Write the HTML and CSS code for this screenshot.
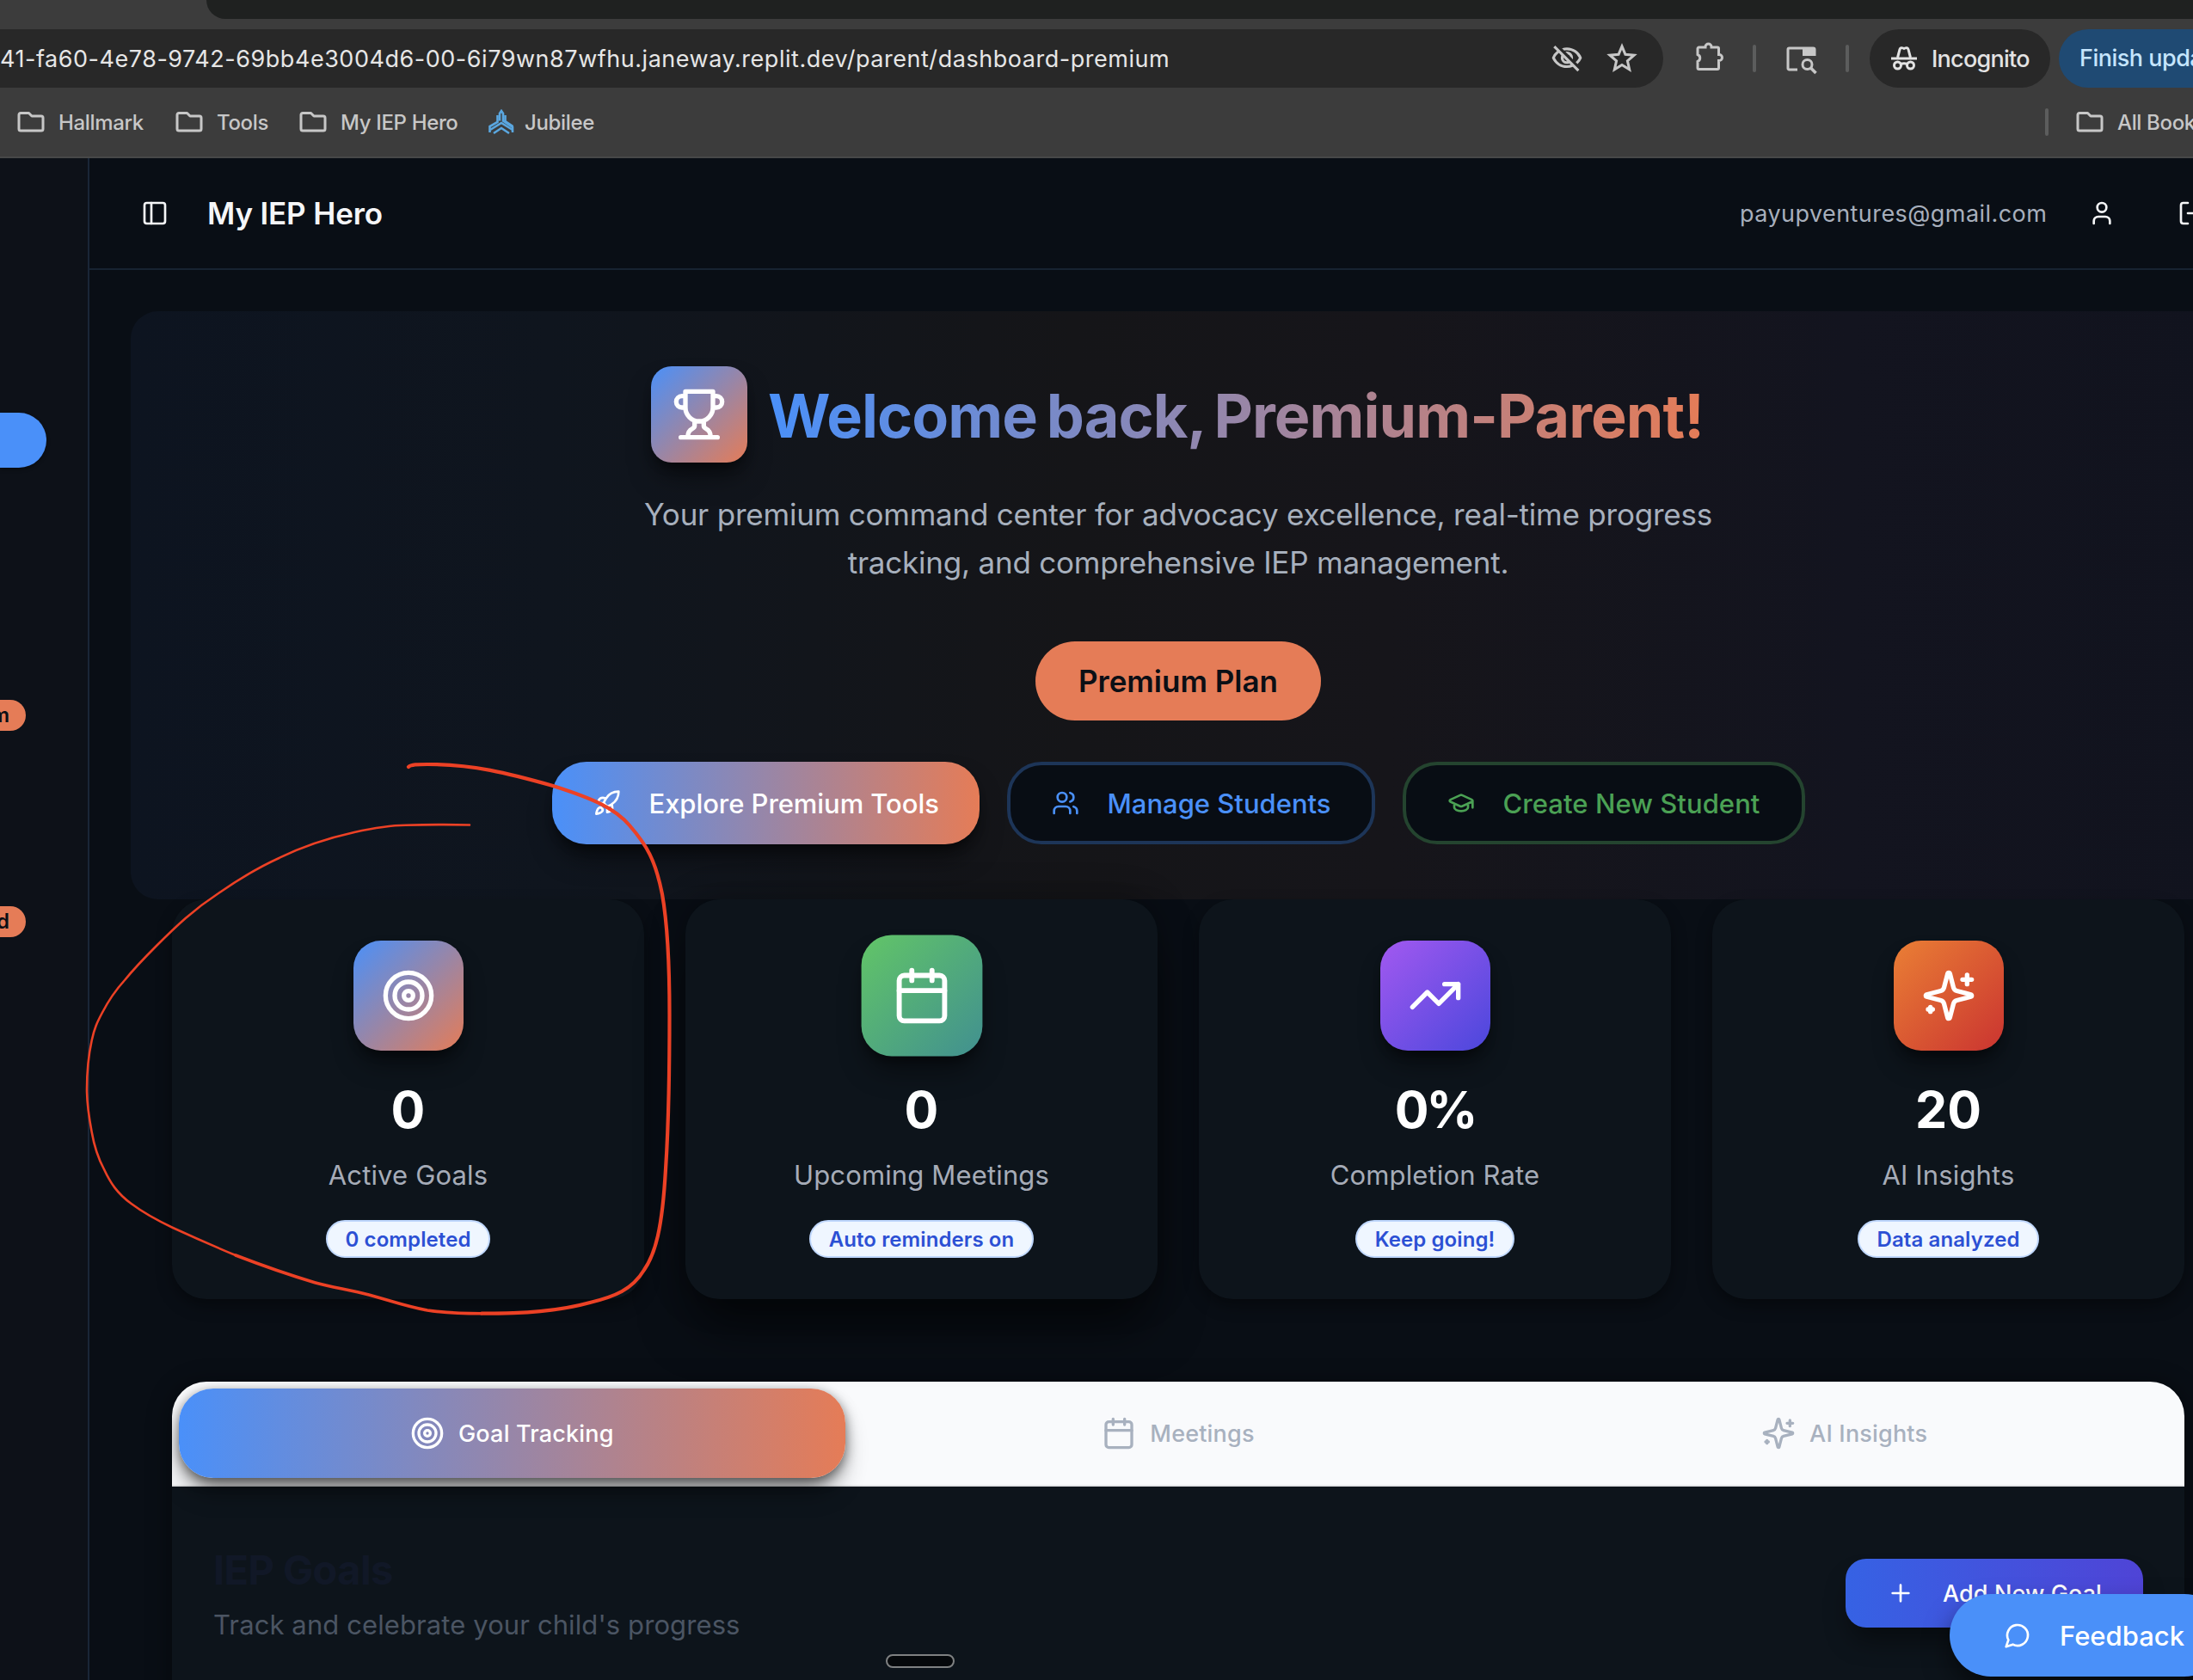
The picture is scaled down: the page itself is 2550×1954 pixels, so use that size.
FILE: index.html
```html
<!DOCTYPE html>
<html lang="en">
<head>
<meta charset="utf-8">
<title>My IEP Hero</title>
<link rel="stylesheet" href="styles.css">
</head>
<body>
<svg class="sprite" aria-hidden="true">
  <symbol id="folder" viewBox="0 0 32 24"><path d="M2 4.500V20a2 2 0 0 0 2 2h24a2 2 0 0 0 2-2V7a2 2 0 0 0-2-2H17l-3.500-3.500H4a2 2 0 0 0-2 2Z" fill="none" stroke="currentColor" stroke-width="3" stroke-linejoin="round"/></symbol>
  <symbol id="target" viewBox="0 0 24 24"><circle cx="12" cy="12" r="10"/><circle cx="12" cy="12" r="6"/><circle cx="12" cy="12" r="2"/></symbol>
  <symbol id="calendar" viewBox="0 0 24 24"><path d="M8 2v4M16 2v4M3 10h18"/><rect width="18" height="18" x="3" y="4" rx="2"/></symbol>
  <symbol id="sparkles" viewBox="0 0 24 24"><path d="M9.937 15.500A2 2 0 0 0 8.500 14.063l-6.135-1.582a.5.5 0 0 1 0-.962L8.500 9.936A2 2 0 0 0 9.937 8.500l1.582-6.135a.5.5 0 0 1 .963 0L14.063 8.500A2 2 0 0 0 15.500 9.937l6.135 1.581a.5.5 0 0 1 0 .964L15.500 14.063a2 2 0 0 0-1.437 1.437l-1.582 6.135a.5.5 0 0 1-.963 0zM20 3v4M22 5h-4M4 17v2M5 18H3"/></symbol>
</svg>

<div class="browser">
  <div class="tabstrip"></div>
  <div class="toolbar">
    <div class="omnibox">
      <span class="url">41-fa60-4e78-9742-69bb4e3004d6-00-6i79wn87wfhu.janeway.replit.dev<span class="path">/parent/dashboard-premium</span></span>
      <svg class="eye" viewBox="0 0 24 24" fill="currentColor"><path d="M12 6a9.770 9.770 0 0 1 8.820 5.500 9.650 9.650 0 0 1-2.410 3.120l1.410 1.410c1.390-1.230 2.490-2.770 3.180-4.530C21.270 7.110 17 4 12 4c-1.270 0-2.490.2-3.640.57l1.650 1.650C10.660 6.090 11.320 6 12 6zm-1.070 1.140L13 9.210c.57.25 1.030.71 1.280 1.280l2.070 2.070c.08-.34.14-.7.14-1.070C16.500 9.010 14.480 7 12 7c-.37 0-.72.05-1.070.14zM2.010 3.870l2.680 2.680A11.738 11.738 0 0 0 1 11.500C2.730 15.890 7 19 12 19c1.520 0 2.980-.29 4.320-.82l3.420 3.420 1.410-1.410L3.420 2.450 2.010 3.870zm7.500 7.500 2.610 2.610c-.04.01-.08.02-.12.02a2.500 2.500 0 0 1-2.500-2.500c0-.05.01-.08.01-.13zm-3.400-3.400 1.750 1.750a4.600 4.600 0 0 0-.36 1.780 4.507 4.507 0 0 0 6.270 4.140l.98.98c-.88.24-1.800.38-2.750.38a9.770 9.770 0 0 1-8.820-5.500c.7-1.430 1.720-2.610 2.930-3.530z"/></svg>
      <svg class="star" viewBox="0 0 32 32"><path d="m16 3.500 3.500 8.300 9 .8-6.800 5.900 2 8.800-7.700-4.700-7.700 4.700 2-8.800-6.800-5.900 9-.8Z" fill="none" stroke="currentColor" stroke-width="2.700"/></svg>
    </div>
    <svg class="puzzle" viewBox="0 0 34 34"><path d="M4.500 6H12v-.5a3.500 3.500 0 0 1 7 0V6h7A1.500 1.500 0 0 1 27.500 7.500V14.500h.5a3.500 3.500 0 0 1 0 7h-.5v8.500A1.500 1.500 0 0 1 26 31.500H4.500A1.500 1.500 0 0 1 3 30V22.500a4.300 4.300 0 0 0 0-8V7.500A1.500 1.500 0 0 1 4.500 6Z" fill="none" stroke="currentColor" stroke-width="3"/></svg>
    <i class="divider"></i>
    <svg class="lens" viewBox="0 0 36 34"><path d="M13 28H3.500A1.500 1.500 0 0 1 2 26.500v-22A1.500 1.500 0 0 1 3.500 3h28A1.500 1.500 0 0 1 33 4.500V12" fill="none" stroke="currentColor" stroke-width="3"/><path d="M19 3h14v9H19z" fill="currentColor"/><circle cx="24.500" cy="22" r="5.500" fill="none" stroke="currentColor" stroke-width="3"/><path d="m28.500 26 6 6" stroke="currentColor" stroke-width="3.500"/></svg>
    <i class="divider second"></i>
    <div class="chip">
      <svg class="spy" viewBox="0 0 30 28" fill="none" stroke="currentColor" stroke-width="3"><path d="M0 14h30"/><path d="M7.500 13 10 3.500C10.500 1.500 12 1 15 2.500c3-1.500 4.500-1 5 1L22.500 13"/><circle cx="7.500" cy="22" r="4"/><circle cx="22.500" cy="22" r="4"/><path d="M11 21c2.500-1.500 5.500-1.500 8 0"/></svg>
      <span class="incog">Incognito</span>
    </div>
    <div class="update"><span>Finish update</span></div>
  </div>
  <div class="bookmarks">
    <span class="bm b1"><svg class="fold"><use href="#folder"/></svg><span>Hallmark</span></span>
    <span class="bm b2"><svg class="fold"><use href="#folder"/></svg><span>Tools</span></span>
    <span class="bm b3"><svg class="fold"><use href="#folder"/></svg><span>My IEP Hero</span></span>
    <span class="bm b4"><svg class="jub" viewBox="0 0 30 30" fill="none" stroke="#5aa7e0" stroke-width="2.600"><path d="M13 13.500V5l2-3 2 3v8.500l11 7.500v6"/><path d="M10.500 7v8L1.500 20v7"/><path d="M19.500 7v7l9 6"/><path d="m2 24 13-8 13 8M6 28l9-6 9 6"/></svg><span>Jubilee</span></span>
    <i class="divider"></i>
    <span class="bm b5"><svg class="fold"><use href="#folder"/></svg><span>All Bookmarks</span></span>
  </div>
</div>

<div class="app">
  <aside class="sidebar">
    <div class="nav-active"></div>
    <span class="tag tag1">m</span>
    <span class="tag tag2">d</span>
  </aside>
  <div class="main">
    <header class="header">
      <svg class="ic panel" viewBox="0 0 24 24"><rect width="18" height="18" x="3" y="3" rx="2"/><path d="M9 3v18"/></svg>
      <h1 class="brand">My IEP Hero</h1>
      <span class="email">payupventures@gmail.com</span>
      <svg class="ic user" viewBox="0 0 24 24"><path d="M19 21v-2a4 4 0 0 0-4-4H9a4 4 0 0 0-4 4v2"/><circle cx="12" cy="7" r="4"/></svg>
      <svg class="ic logout" viewBox="0 0 24 24"><path d="M9 21H5a2 2 0 0 1-2-2V5a2 2 0 0 1 2-2h4M16 17l5-5-5-5M21 12H9"/></svg>
    </header>

    <section class="hero">
      <div class="hello">
        <div class="trophy"><svg class="ic big" viewBox="0 0 24 24"><path d="M6 9H4.500a2.500 2.500 0 0 1 0-5H6M18 9h1.500a2.500 2.500 0 0 0 0-5H18M4 22h16M10 14.660V17c0 .55-.47.98-.97 1.210C7.850 18.750 7 20.240 7 22M14 14.660V17c0 .55.470.980.970 1.210C16.150 18.750 17 20.240 17 22M18 2H6v7a6 6 0 0 0 12 0V2Z"/></svg></div>
        <h2 class="welcome">Welcome back, Premium-Parent!</h2>
      </div>
      <p class="lead"><span class="l1">Your premium command center for advocacy excellence, real-time progress</span><br><span class="l2">tracking, and comprehensive IEP management.</span></p>
      <div class="plan"><span>Premium Plan</span></div>
      <div class="actions">
        <div class="btn explore"><svg class="ic" viewBox="0 0 24 24"><path d="M4.500 16.500c-1.500 1.260-2 5-2 5s3.740-.5 5-2c.71-.84.7-2.130-.09-2.910a2.180 2.180 0 0 0-2.910-.09zM12 15l-3-3a22 22 0 0 1 2-3.950A12.880 12.880 0 0 1 22 2c0 2.720-.78 7.500-6 11a22.350 22.350 0 0 1-4 2zM9 12H4s.55-3.030 2-4c1.620-1.080 5 0 5 0M12 15v5s3.030-.55 4-2c1.080-1.620 0-5 0-5"/></svg><span>Explore Premium Tools</span></div>
        <div class="btn manage"><svg class="ic" viewBox="0 0 24 24"><path d="M16 21v-2a4 4 0 0 0-4-4H6a4 4 0 0 0-4 4v2M22 21v-2a4 4 0 0 0-3-3.870M16 3.130a4 4 0 0 1 0 7.750"/><circle cx="9" cy="7" r="4"/></svg><span>Manage Students</span></div>
        <div class="btn create"><svg class="ic" viewBox="0 0 24 24"><path d="M21.420 10.922a1 1 0 0 0-.019-1.838L12.830 5.180a2 2 0 0 0-1.660 0L2.600 9.080a1 1 0 0 0 0 1.832l8.570 3.908a2 2 0 0 0 1.660 0zM22 10v6M6 12.500V16a6 3 0 0 0 12 0v-3.500"/></svg><span>Create New Student</span></div>
      </div>
    </section>

    <section class="stats">
      <article class="stat">
        <div class="tile t-blue"><svg class="ic big"><use href="#target"/></svg></div>
        <strong class="num">0</strong><span class="label">Active Goals</span><span class="pill p1">0 completed</span>
      </article>
      <article class="stat raised">
        <div class="tile t-green"><svg class="ic big"><use href="#calendar"/></svg></div>
        <strong class="num">0</strong><span class="label">Upcoming Meetings</span><span class="pill p2">Auto reminders on</span>
      </article>
      <article class="stat">
        <div class="tile t-purple"><svg class="ic big" viewBox="0 0 24 24"><path d="m22 7-8.500 8.500-5-5L2 17M16 7h6v6"/></svg></div>
        <strong class="num pct">0%</strong><span class="label">Completion Rate</span><span class="pill p3">Keep going!</span>
      </article>
      <article class="stat">
        <div class="tile t-orange"><svg class="ic big"><use href="#sparkles"/></svg></div>
        <strong class="num">20</strong><span class="label">AI Insights</span><span class="pill p4">Data analyzed</span>
      </article>
    </section>

    <section class="board">
      <div class="tabs">
        <div class="tab on"><svg class="ic mid"><use href="#target"/></svg><span>Goal Tracking</span></div>
        <div class="tab"><svg class="ic mid"><use href="#calendar"/></svg><span>Meetings</span></div>
        <div class="tab"><svg class="ic mid"><use href="#sparkles"/></svg><span>AI Insights</span></div>
      </div>
      <div class="goals">
        <div>
          <h3 class="goals-title"><span>IEP Goals</span></h3>
          <p class="goals-sub"><span>Track and celebrate your child's progress</span></p>
        </div>
        <div class="add"><svg class="ic" viewBox="0 0 24 24"><path d="M5 12h14M12 5v14"/></svg><span>Add New Goal</span></div>
      </div>
    </section>
  </div>
</div>

<div class="feedback"><svg class="ic" viewBox="0 0 24 24"><path d="M7.900 20A9 9 0 1 0 4 16.100L2 22Z"/></svg><span>Feedback</span></div>
<div class="handle"></div>

<svg class="scribble" viewBox="0 0 2550 1954" fill="none" stroke="#ec4125" stroke-linecap="round">
  <path stroke-width="4.200" d="M475 892C478 889 486 889 497 889C550 889 590 899 643 914C690 929 715 940 732 960C752 983 762 1000 770 1040C778 1085 778.500 1140 778.500 1180C778.500 1240 778 1300 774 1360C770 1430 762 1458 749 1477C735 1500 715 1508 686 1515C650 1525 610 1527.700 560 1527.700"/>
  <path stroke-width="3.600" d="M560 1527.700C530 1527.700 510 1526 497 1524C470 1519 452 1512 429 1506C405 1500 385 1497 366 1491.700C330 1481 300 1470 274 1460"/>
  <path stroke-width="2.600" d="M274 1460C250 1450 225 1439 201 1428C180 1418 166 1410 152.700 1400C136 1388 128 1375 121 1360C113 1345 109 1330 106.700 1316.700C102 1292 101 1280 101 1267C101 1245 103 1227 106.700 1210C110 1195 113 1189 118.800 1178C126 1164 135 1151 145 1140C158 1124 170 1112 182 1100C205 1077 225 1058 254 1039C277 1023 300 1009 325 997.700C355 983 385 974 412 968C435 963 455 960 471.600 959.800C500 959 525 959 546 959.500"/>
</svg>
</body>
</html>
```
FILE: styles.css
```css
* { box-sizing: border-box; }
html, body { margin: 0; padding: 0; }
body {
  width: 2550px; height: 1954px; overflow: hidden; position: relative;
  display: flex; flex-direction: column;
  background: #090e15; color: #fff;
  font-family: Inter, "Liberation Sans", sans-serif;
}
h1, h2, h3, p { margin: 0; }
span { white-space: nowrap; }
svg { display: block; flex: none; }
.sprite { position: absolute; width: 0; height: 0; }
.ic { width: 32px; height: 32px; fill: none; stroke: currentColor; stroke-width: 2; stroke-linecap: round; stroke-linejoin: round; }
.ic.big { width: 64px; height: 64px; }
.ic.mid { width: 40px; height: 40px; }

/* browser chrome */
.browser { height: 184px; flex: none; background: #3c3c3c; border-bottom: 2px solid #474848; color: #c7c7c7; overflow: hidden; }
.tabstrip { height: 22px; margin-left: 240px; background: #1f2120; border-bottom-left-radius: 24px; }
.toolbar { display: flex; align-items: center; margin-top: 12px; height: 68px; }
.omnibox { display: flex; align-items: center; width: 1934px; height: 68px; background: #282828; border-radius: 0 34px 34px 0; flex: none; }
.url { width: 1803px; font-size: 27px; line-height: 69px; color: #e6e6e6; flex: none; letter-spacing: .53px; }
.eye { width: 38px; height: 38px; }
.star { width: 36px; height: 36px; margin-left: 27px; }
.puzzle { width: 34px; height: 34px; margin: 0 0 4px 37px; }
.divider { width: 4px; height: 32px; border-radius: 2px; background: #5c5d5d; flex: none; margin-left: 33px; }
.lens { width: 36px; height: 34px; margin: 4px 0 0 35px; }
.divider.second { margin-left: 33px; }
.chip { display: flex; align-items: center; width: 210px; height: 68px; margin-left: 24px; padding-left: 25px; border-radius: 34px; background: #282828; color: #e3e3e3; font-size: 27px; letter-spacing: -.75px; flex: none; font-weight: 500; }
.spy { width: 30px; height: 28px; margin-right: 17px; }
.update { width: 300px; height: 68px; margin-left: 10px; padding-left: 24px; border-radius: 34px; background: #1f4a73; color: #c5e5fd; font-size: 27px; letter-spacing: -.5px; line-height: 68px; flex: none; font-weight: 500; }
.bookmarks { display: flex; align-items: center; height: 80px; padding-left: 20px; font-size: 24px; letter-spacing: -.35px; }
.bm { display: flex; align-items: center; gap: 16px; flex: none; font-weight: 500; }
.fold { width: 32px; height: 24px; }
.jub { width: 30px; height: 30px; }
.b1 { width: 184px; }
.b2 { width: 144px; }
.b3 { width: 220px; }
.b4 { width: 1778px; gap: 12px; }
.bookmarks .divider { margin: 0 32px; }

/* app frame */
.app { display: flex; flex: 1; min-height: 0; }
.sidebar { width: 104px; flex: none; background: #0d1118; border-right: 2px solid #1a2637; padding-top: 296px; overflow: hidden; }
.nav-active { width: 54px; height: 64px; background: #4a90f9; border-radius: 0 32px 32px 0; box-shadow: 0 2px 4px rgba(0,0,0,.4); }
.tag { display: flex; justify-content: flex-end; width: 30px; height: 36px; padding-right: 19px; background: #e57c57; color: #0b0f15; border-radius: 0 18px 18px 0; font-size: 24px; line-height: 36px; font-weight: 600; }
.tag1 { margin-top: 270px; }
.tag2 { margin-top: 204px; }
.main { width: 2532px; flex: none; }
.header { display: flex; align-items: center; height: 130px; padding-left: 60px; border-bottom: 2px solid #172331; color: #f5f6f8; }
.brand { width: 1782px; margin-left: 45px; font-size: 35px; font-weight: 600; letter-spacing: -.15px; }
.email { width: 405px; font-size: 27px; letter-spacing: .44px; color: #a7afbc; }
.logout { margin-left: 72px; }

/* hero */
.hero { width: 2436px; height: 684px; margin: 48px 0 0 48px; padding-top: 64px; border-radius: 32px; background: linear-gradient(90deg, #0d1420 0%, #0f151e 20%, #151518 45%, #16151a 60%, #13141f 82%, #11131e 100%); display: flex; flex-direction: column; align-items: center; }
.hello { display: flex; align-items: center; gap: 24px; }
.trophy { display: flex; align-items: center; justify-content: center; width: 112px; height: 112px; border-radius: 24px; background: linear-gradient(135deg, #4a90f9, #e57c57); box-shadow: 0 20px 30px -6px rgba(0,0,0,.5), 0 8px 12px -4px rgba(0,0,0,.4); }
.welcome { width: 1090px; padding-top: 3px; font-size: 70px; letter-spacing: -.94px; word-spacing: -4.7px; line-height: 90px; font-weight: 700; white-space: nowrap; background: linear-gradient(90deg, #4a90f9, #e57c57); -webkit-background-clip: text; background-clip: text; color: transparent; }
.lead { margin-top: 32px; font-size: 35px; letter-spacing: -.22px; line-height: 56px; text-align: center; color: #a7b0bd; }
.plan { display: flex; align-items: center; justify-content: center; width: 332px; height: 92px; margin-top: 64px; border-radius: 46px; background: #e57c57; color: #0b0f15; font-size: 35px; font-weight: 600; }
.actions { display: flex; gap: 32px; margin-top: 48px; }
.btn { display: flex; align-items: center; height: 96px; padding-left: 48px; border-radius: 40px; font-size: 31px; font-weight: 500; gap: 33px; }
.btn span { padding-top: 1px; }
.explore { width: 497px; letter-spacing: -.06px; background: linear-gradient(90deg, #4a90f9, #e57c57); box-shadow: 0 20px 30px -6px rgba(0,0,0,.5), 0 8px 12px -4px rgba(0,0,0,.4); }
.manage { width: 428px; border: 4px solid #1d3558; background: #080d14; color: #4a90f9; }
.create { width: 468px; letter-spacing: .06px; border: 4px solid #24442f; background: #080d14; color: #4ba154; }

/* stats */
.stats { display: grid; grid-template-columns: repeat(4, 549px); gap: 48px; margin-left: 96px; }
.stat { display: flex; flex-direction: column; align-items: center; height: 465px; padding-top: 48px; border-radius: 40px; background: #0d141b; box-shadow: 0 8px 20px -2px rgba(0,0,0,.45); }
.stat.raised { box-shadow: 0 40px 60px -10px rgba(0,0,0,.6), 0 0 40px rgba(0,0,0,.3); }
.tile { display: flex; align-items: center; justify-content: center; width: 128px; height: 128px; border-radius: 32px; box-shadow: 0 20px 30px -6px rgba(0,0,0,.45), 0 8px 12px -4px rgba(0,0,0,.4); }
.raised .tile { transform: scale(1.1); }
.t-blue { background: linear-gradient(135deg, #4a90f9, #e57c57); }
.t-green { background: linear-gradient(135deg, #62c567, #419090); }
.t-purple { background: linear-gradient(135deg, #a259f0, #4b47dc); }
.t-orange { background: linear-gradient(135deg, #ea7f35, #ca3430); }
.num { margin-top: 33px; font-size: 59px; line-height: 72px; font-weight: 700; }
.num.pct { letter-spacing: -3px; }
.label { margin-top: 16px; font-size: 31px; letter-spacing: .15px; line-height: 48px; color: #a6acb8; }
.pill { display: flex; align-items: center; justify-content: center; height: 44px; margin-top: 28px; border: 2px solid #bfd7fd; border-radius: 22px; background: #eff6ff; color: #2c50d4; font-size: 24px; font-weight: 600; letter-spacing: .1px; }
.p1 { width: 191px; }
.p2 { width: 261px; }
.p3 { width: 185px; }
.p4 { width: 211px; }

/* tabbed board */
.board { width: 2340px; height: 420px; margin: 96px 0 0 96px; border-radius: 40px 40px 0 0; overflow: hidden; background: #0d141b; box-shadow: 0 4px 24px 6px rgba(0,0,0,.3); }
.tabs { display: grid; grid-template-columns: repeat(3, 1fr); height: 122px; padding: 8px; border-bottom: 2px solid #e5e6e8; background: #f9fafc; }
.tab { display: flex; align-items: center; justify-content: center; gap: 16px; height: 104px; border-radius: 40px; font-size: 27px; letter-spacing: .18px; font-weight: 500; color: #a8b1bf; }
.tab.on { color: #fff; background: linear-gradient(90deg, #4a90f9, #e57c57); box-shadow: 0 20px 30px -6px rgba(0,0,0,.45), 0 4px 14px rgba(0,0,0,.5); }
.goals { display: flex; justify-content: space-between; padding: 64px 48px 0; }
.goals-title { font-size: 47px; letter-spacing: -.6px; line-height: 64px; font-weight: 700; color: #111827; padding-top: 1px; }
.goals-sub { font-size: 31px; letter-spacing: .1px; line-height: 48px; color: #4b5563; margin-top: 8px; }
.add { display: flex; align-items: center; width: 346px; height: 80px; margin-top: 20px; padding-left: 48px; gap: 33px; border-radius: 24px; background: linear-gradient(90deg, #3662e4, #4f44d6); font-size: 27px; letter-spacing: .1px; font-weight: 500; box-shadow: 0 20px 30px -6px rgba(0,0,0,.45); }

/* floating layers */
.feedback { position: absolute; left: 2267px; top: 1854px; display: flex; align-items: center; width: 321px; height: 96px; padding-left: 63px; gap: 33px; border-radius: 48px; background: #4a90f9; font-size: 31px; font-weight: 500; box-shadow: 0 16px 30px rgba(0,0,0,.5); }
.handle { position: absolute; left: 1030px; top: 1924px; width: 80px; height: 16px; border: 2px solid #7f8182; border-radius: 8px; background: #05080b; }
.scribble { position: absolute; left: 0; top: 0; width: 2550px; height: 1954px; pointer-events: none; }
```
